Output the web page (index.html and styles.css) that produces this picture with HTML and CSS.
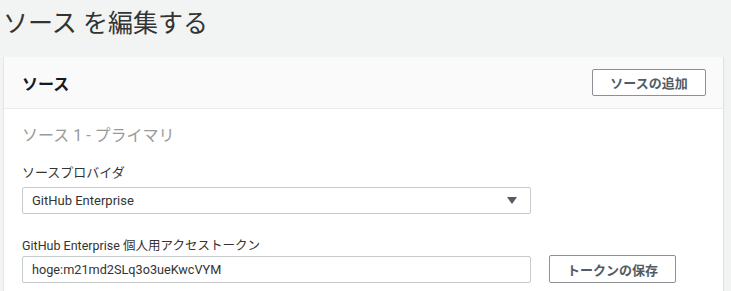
FILE: index.html
```html
<!DOCTYPE html>
<html lang="ja">
<head>
    <meta charset="UTF-8">
    <title>ソース を編集する</title>
    <link rel="stylesheet" href="styles.css">
</head>
<body>
    <h1 class="page-title">ソース を編集する</h1>

    <div class="panel">
        <div class="panel-header">
            <h2>ソース</h2>
            <button class="btn">ソースの追加</button>
        </div>
        <div class="panel-body">
            <h3 class="source-title">ソース 1 - プライマリ</h3>

            <label class="field-label">ソースプロバイダ</label>
            <div class="select">
                <span>GitHub Enterprise</span>
                <span class="arrow"></span>
            </div>

            <label class="field-label token-label">GitHub Enterprise 個人用アクセストークン</label>
            <div class="token-row">
                <input class="text-input" type="text" value="hoge:m21md2SLq3o3ueKwcVYM">
                <button class="btn btn-token">トークンの保存</button>
            </div>
        </div>
    </div>
</body>
</html>
```

FILE: styles.css
```css
body {
    margin: 0;
    background-color: #f2f3f3;
    color: #333;
    font-family: Roboto, "Noto Sans CJK JP", sans-serif;
}

.page-title {
    margin: 0;
    padding: 9px 0 0 3px;
    font-size: 25px;
    line-height: 30px;
    font-weight: normal;
    color: #333;
}

.panel {
    margin: 18px 0 0 3px;
    width: 719px;
    height: 240px;
    background-color: #fff;
    border-left: 1px solid #e4e6e6;
    border-right: 1px solid #dfe2e2;
}

.panel-header {
    display: flex;
    align-items: center;
    justify-content: space-between;
    height: 51px;
    padding: 0 17px 0 18px;
    background-color: #fafafa;
    border-bottom: 1px solid #eaeded;
}

.panel-header h2 {
    margin: 0;
    font-size: 16px;
    font-weight: bold;
    color: #16191f;
}

.btn {
    font-family: Roboto, "Noto Sans CJK JP", sans-serif;
    font-size: 13px;
    font-weight: bold;
    color: #545b64;
    background-color: #fff;
    border: 1px solid #8d9096;
    border-radius: 2px;
    height: 27px;
    width: 114px;
    padding: 0;
    cursor: pointer;
}

.panel-body {
    padding: 17px 18px 0 18px;
}

.source-title {
    margin: 0;
    font-size: 16px;
    line-height: 20px;
    font-weight: normal;
    color: #9a9a9a;
}

.field-label {
    display: block;
    margin-top: 18px;
    font-size: 13px;
    line-height: 18px;
    color: #333;
}

.token-label {
    margin-top: 23px;
    font-size: 12.5px;
}

.select {
    display: flex;
    align-items: center;
    justify-content: space-between;
    box-sizing: border-box;
    width: 509px;
    height: 27px;
    margin-top: 5px;
    padding: 0 13px 0 9px;
    border: 1px solid #c6cbcc;
    border-radius: 2px;
    font-size: 13px;
    color: #333;
}

.arrow {
    width: 0;
    height: 0;
    border-left: 5px solid transparent;
    border-right: 5px solid transparent;
    border-top: 7px solid #545b64;
}

.token-row {
    display: flex;
    align-items: center;
    gap: 18px;
}

.text-input {
    box-sizing: border-box;
    width: 509px;
    height: 27px;
    margin: 0;
    padding: 0 9px;
    border: 1px solid #c6cbcc;
    border-radius: 2px;
    font-family: Roboto, "Noto Sans CJK JP", sans-serif;
    font-size: 12.7px;
    color: #333;
}

.btn-token {
    width: 127px;
    height: 28px;
}
```
